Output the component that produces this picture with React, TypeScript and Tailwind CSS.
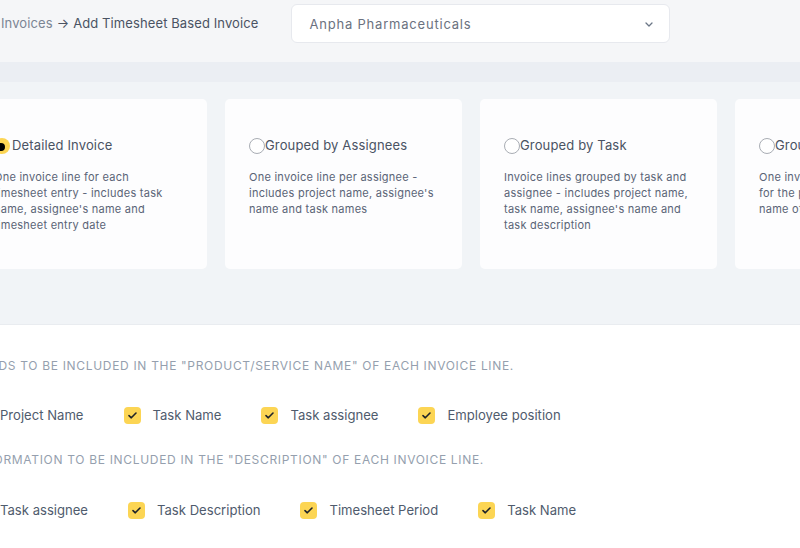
import React, { useState } from "react";

const cards = [
  {
    id: "detailed",
    title: "Detailed Invoice",
    text: "One invoice line for each timesheet entry - includes task name, assignee's name and timesheet entry date",
  },
  {
    id: "assignees",
    title: "Grouped by Assignees",
    text: "One invoice line per assignee - includes project name, assignee's name and task names",
  },
  {
    id: "task",
    title: "Grouped by Task",
    text: "Invoice lines grouped by task and assignee - includes project name, task name, assignee's name and task description",
  },
  {
    id: "project",
    title: "Grouped by Project",
    text: "One invoice line with total hours\nfor the project - includes project\nname of each task",
  },
];

const nameFields = ["Project Name", "Task Name", "Task assignee", "Employee position"];
const descFields = ["Task assignee", "Task Description", "Timesheet Period", "Task Name"];

const Check: React.FC<{ label: string }> = ({ label }) => (
  <label className="flex items-center gap-3 mr-[40px] shrink-0">
    <span className="w-[17px] h-[17px] rounded-[4px] bg-[#fcd554] flex items-center justify-center">
      <svg width="9" height="7" viewBox="0 0 9 7" fill="none">
        <path d="M1 3.6L3.3 5.8L8 1" stroke="#1f2329" strokeWidth="1.6" strokeLinecap="round" strokeLinejoin="round" />
      </svg>
    </span>
    <span className="text-[13.1px] text-[#4f5b6d]">{label}</span>
  </label>
);

export default function App() {
  const [selected, setSelected] = useState("detailed");

  return (
    <div className="w-[800px] h-[548px] overflow-hidden bg-white font-['Inter',sans-serif]">
      <div className="h-[62px] bg-[#f5f6f8] flex items-start pt-1">
        <div className="flex items-center h-[39px] pl-px text-[13px] tracking-[0.1px]">
          <span className="text-[#7b8594]">Invoices</span>
          <span className="text-[#4a5363] mx-1">→</span>
          <span className="text-[#4a5363]">Add Timesheet Based Invoice</span>
        </div>
        <div className="ml-[33px] w-[379px] h-[39px] bg-white border border-[#e7e9ee] rounded-md flex items-center justify-between pl-[17px] pr-[16px] pt-[2px]">
          <span className="text-[13px] text-[#6b7280] tracking-[0.8px]">Anpha Pharmaceuticals</span>
          <svg width="8" height="5" viewBox="0 0 8 5" fill="none">
            <path d="M1 1L4 4L7 1" stroke="#6b7686" strokeWidth="1.3" strokeLinecap="round" strokeLinejoin="round" />
          </svg>
        </div>
      </div>
      <div className="h-[20px] bg-[#ebeef3]" />
      <div className="h-[243px] bg-[#f1f4f7] border-b border-[#e9ecf0] pt-[17px]">
        <div className="flex gap-[18px] ml-[-30px]">
          {cards.map((c) => (
            <div
              key={c.id}
              onClick={() => setSelected(c.id)}
              className="w-[237px] h-[170px] shrink-0 bg-[#fdfdfe] rounded-[5px] px-6 pt-[37px] cursor-pointer"
            >
              <div className="flex items-center text-[13px] text-[#4a5363] tracking-[0.15px]">
                {selected === c.id ? (
                  <span className="w-4 h-4 rounded-full bg-[#fcd554] flex items-center justify-center mr-[2px]">
                    <span className="w-[8px] h-[8px] rounded-full bg-black mt-[2px] mr-[2px]" />
                  </span>
                ) : (
                  <span className="w-4 h-4 rounded-full border border-[#a9adb4] bg-white" />
                )}
                <span>{c.title}</span>
              </div>
              <p className="mt-[13px] text-[11px] leading-[16px] text-[#5a6476] tracking-[0.25px] whitespace-pre-line">
                {c.text}
              </p>
            </div>
          ))}
        </div>
      </div>
      <div className="pt-[32px]">
        <div className="w-[514px] flex justify-end">
          <span className="shrink-0 whitespace-nowrap text-[12px] uppercase text-[#959fae] tracking-[0.68px]">
            Select fields to be included in the "Product/Service Name" of each invoice line.
          </span>
        </div>
        <div className="flex mt-[31px] ml-[-29px]">
          {nameFields.map((f) => (
            <Check key={f} label={f} />
          ))}
        </div>
        <div className="w-[484px] flex justify-end mt-[25px]">
          <span className="shrink-0 whitespace-nowrap text-[12px] uppercase text-[#959fae] tracking-[0.68px]">
            Select information to be included in the "Description" of each invoice line.
          </span>
        </div>
        <div className="flex mt-[32px] ml-[-29px]">
          {descFields.map((f) => (
            <Check key={f} label={f} />
          ))}
        </div>
      </div>
    </div>
  );
}
